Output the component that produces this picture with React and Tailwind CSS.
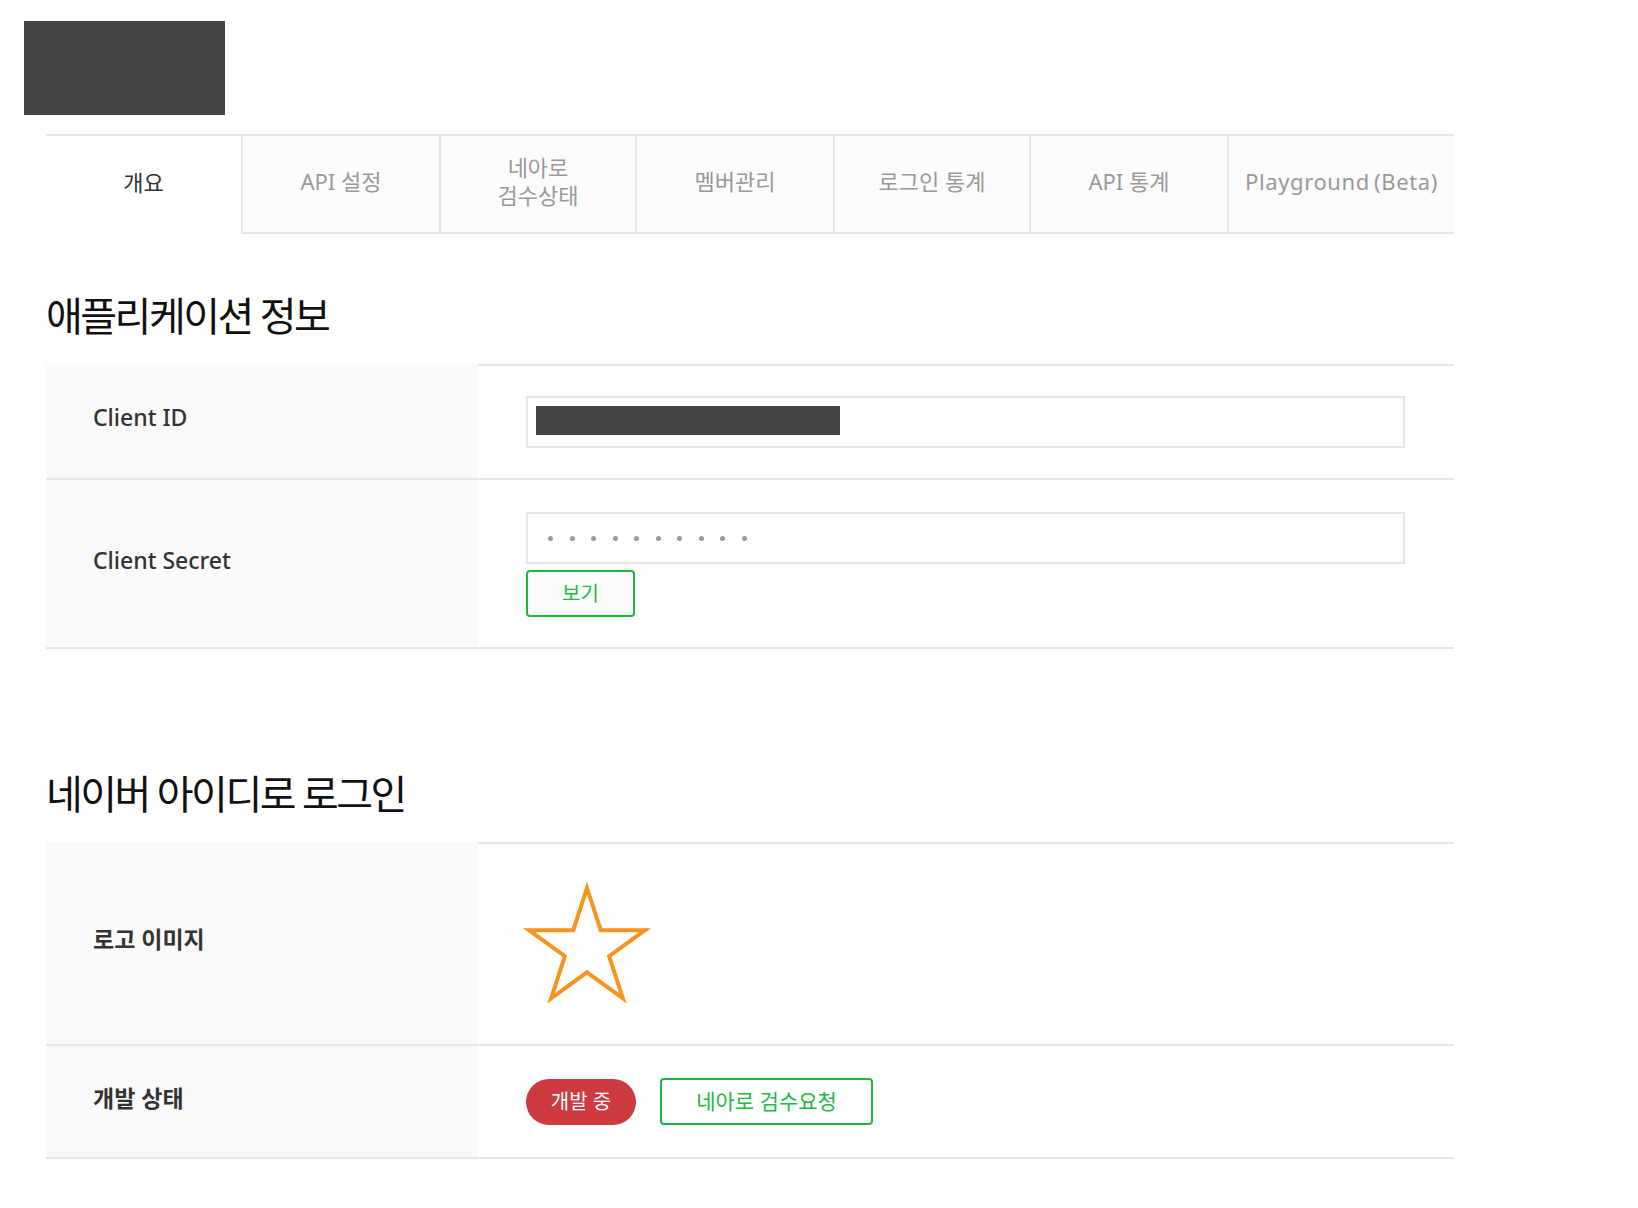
const FONT = { fontFamily: "'Noto Sans', 'Noto Sans CJK KR', sans-serif" };

const TABS = [
  { label: "API 설정", w: "w-[198px]" },
  { label: <>네아로<br />검수상태</>, w: "w-[196px]" },
  { label: "멤버관리", w: "w-[198px]" },
  { label: "로그인 통계", w: "w-[196px]" },
  { label: "API 통계", w: "w-[198px]" },
  { label: <span className="tracking-[0.6px]">Playground{"\u2009"}(Beta)</span>, w: "w-[227px]" },
];

function Star() {
  return (
    <svg width="132" height="126" viewBox="0 0 132 126" className="block">
      <polygon
        points="66,8 79.7,50.15 124.01,50.15 88.16,76.2 101.86,118.35 66,92.3 30.14,118.35 43.84,76.2 7.99,50.15 52.3,50.15"
        fill="none"
        stroke="#f7941e"
        strokeWidth="4"
        strokeLinejoin="miter"
        strokeMiterlimit="10"
      />
    </svg>
  );
}

function Label({ children, bold }) {
  return (
    <div className={`w-[432px] shrink-0 bg-[#fafafa] pl-[47px] pb-[7px] flex items-center text-[23px] text-[#333] ${bold ? "font-bold" : "font-medium"}`}>
      {children}
    </div>
  );
}

export default function App() {
  return (
    <div className="min-h-screen bg-white pt-[21px]" style={FONT}>
      <div className="ml-[24px] w-[201px] h-[94px] bg-[#444]" />

      <div className="ml-[46px] w-[1408px] mt-[19px] pb-[50px]">
        {/* tabs */}
        <div className="flex border-t-2 border-[#e6e6e6]">
          <div className="w-[195px] h-[98px] pb-[6px] flex items-center justify-center text-[22px] text-[#333] bg-white">
            개요
          </div>
          {TABS.map((t, i) => (
            <div key={i}
              className={`${t.w} h-[98px] pb-[6px] flex items-center justify-center text-center text-[22px] leading-[28px] text-[#999] bg-[#fcfcfc] border-l-2 border-b-2 border-[#e6e6e6]`}>
              <span>{t.label}</span>
            </div>
          ))}
        </div>

        {/* 애플리케이션 정보 */}
        <h2 className="mt-[62px] mb-[28px] text-[40px] leading-[40px] tracking-[-2.5px] text-[#111]">애플리케이션 정보</h2>

        <div>
          <div className="flex border-b-2 border-[#e6e6e6]">
            <Label>Client ID</Label>
            <div className="flex-1 border-t-2 border-[#e6e6e6] pl-[48px] pr-[49px] pt-[30px] pb-[30px]">
              <div className="h-[52px] border-2 border-[#e6e6e6] pl-[8px] pt-[8px]">
                <div className="w-[304px] h-[29px] bg-[#444]" />
              </div>
            </div>
          </div>
          <div className="flex border-b-2 border-[#e6e6e6]">
            <Label>Client Secret</Label>
            <div className="flex-1 pl-[48px] pr-[49px] pt-[32px] pb-[30px]">
              <div className="h-[52px] border-2 border-[#e6e6e6] pl-[20px] flex items-center gap-[16.5px]">
                {Array.from({ length: 10 }).map((_, i) => (
                  <span key={i} className="w-[5px] h-[5px] rounded-full bg-[#999]" />
                ))}
              </div>
              <button className="mt-[6px] w-[109px] h-[47px] border-2 border-[#20b83e] rounded-[4px] bg-[#fcfcfc] text-[20px] text-[#22bb40] flex items-center justify-center">
                보기
              </button>
            </div>
          </div>
        </div>

        {/* 네이버 아이디로 로그인 */}
        <h2 className="mt-[125px] mb-[28px] text-[40px] leading-[40px] tracking-[-2.5px] text-[#111]">네이버 아이디로 로그인</h2>

        <div>
          <div className="flex border-b-2 border-[#e6e6e6]">
            <Label bold>로고 이미지</Label>
            <div className="flex-1 border-t-2 border-[#e6e6e6] pl-[43px] pt-[36px] pb-[38px]">
              <Star />
            </div>
          </div>
          <div className="flex border-b-2 border-[#e6e6e6]">
            <Label bold>개발 상태</Label>
            <div className="flex-1 h-[111px] pl-[48px] flex items-center gap-[24px]">
              <span className="w-[110px] h-[46px] rounded-full bg-[#cd3b41] text-white text-[20px] flex items-center justify-center">
                개발 중
              </span>
              <button className="w-[213px] h-[47px] border-2 border-[#20b83e] rounded-[4px] bg-white text-[21px] text-[#22bb40] flex items-center justify-center">
                네아로 검수요청
              </button>
            </div>
          </div>
        </div>
      </div>
    </div>
  );
}
